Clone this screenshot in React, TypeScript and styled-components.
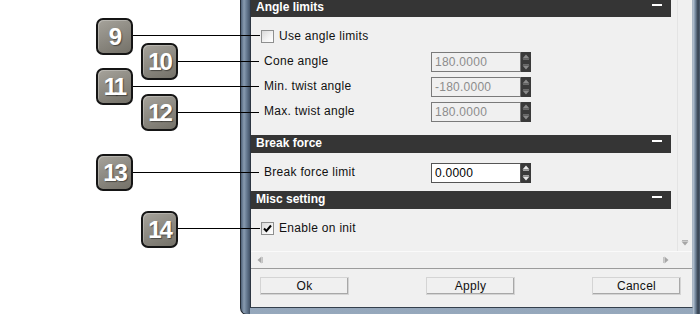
import styled, { createGlobalStyle } from "styled-components";

const GlobalStyle = createGlobalStyle`
  html, body {
    margin: 0;
    padding: 0;
    background: #ffffff;
  }
  body {
    font-family: "Liberation Sans", Arial, sans-serif;
    font-size: 12px;
    color: #111111;
    overflow: hidden;
  }
`;

const Stage = styled.div`
  position: relative;
  width: 700px;
  height: 314px;
  overflow: hidden;
  display: flex;
`;

const Frame = styled.div`
  margin-left: 240px;
  width: 461px;
  height: 315px;
  flex-shrink: 0;
  box-sizing: border-box;
  display: flex;
  padding: 0 8px 6px 9px;
  border-left: 1px solid #232a33;
  border-bottom: 1px solid #232a33;
  border-bottom-left-radius: 7px;
  background:
    linear-gradient(to right, #4f6177 0, #889bb0 3px, #62768d 6px, #425266 9px) left top / 9px 100% no-repeat,
    linear-gradient(to right, #bcc8d4 0, #7f93a9 2px, #34404e 5px, #5d7086 8px) right top / 8px 100% no-repeat,
    linear-gradient(to bottom, #55677b, #96a8bc);
`;

const Inner = styled.div`
  flex: 1;
  display: flex;
  flex-direction: column;
  background: #f0f0f0;
  border-left: 1px solid #2c3541;
  border-right: 1px solid #a9b6c4;
  border-bottom: 1px solid #34404c;
`;

const ScrollArea = styled.div`
  display: flex;
  height: 251px;
`;

const Content = styled.div`
  width: 426px;
  overflow: hidden;
  margin-top: -1px;
`;

const SectionHeader = styled.div`
  height: 18px;
  margin-right: 6px;
  padding-left: 5px;
  display: flex;
  justify-content: space-between;
  background: #353535;
  color: #ffffff;
  font-weight: bold;
  font-size: 12px;
  line-height: 16px;
`;

const Collapse = styled.span`
  width: 10px;
  height: 2px;
  margin: 5px 9px 0 0;
  background: #ffffff;
`;

const SectionBody = styled.div<{ $top: number; $bottom: number }>`
  padding-top: ${(p) => p.$top}px;
  padding-bottom: ${(p) => p.$bottom}px;
`;

const FieldRow = styled.div`
  display: flex;
  align-items: center;
  height: 25px;
  padding-left: 13px;
`;

const FieldLabel = styled.span`
  width: 167px;
  line-height: 25px;
  letter-spacing: 0.3px;
  color: #111111;
`;

const CheckRow = styled.label`
  display: flex;
  align-items: center;
  gap: 5px;
  height: 25px;
  padding-left: 10px;
  line-height: 25px;
  letter-spacing: 0.3px;
  color: #111111;
`;

const CheckBox = styled.span`
  width: 13px;
  height: 13px;
  box-sizing: border-box;
  border: 1px solid #8e8f8f;
  background: linear-gradient(135deg, #d9d9d9 0%, #f4f4f4 60%, #ffffff 100%);
  display: flex;
  align-items: center;
  justify-content: center;
`;

const Spin = styled.div`
  display: flex;
  height: 20px;
`;

const SpinField = styled.div<{ $disabled: boolean }>`
  width: 90px;
  box-sizing: border-box;
  border: 1px solid ${(p) => (p.$disabled ? "#7a7a7a" : "#555555")};
  background: ${(p) => (p.$disabled ? "#f0f0f0" : "#ffffff")};
  color: ${(p) => (p.$disabled ? "#8c8c8c" : "#000000")};
  padding-left: 3px;
  line-height: 18px;
  font-size: 12px;
  letter-spacing: 0.25px;
`;

const SpinButtons = styled.div`
  width: 10px;
  background: #3a3a3a;
`;

const VScroll = styled.div`
  width: 15px;
  box-sizing: border-box;
  border-left: 1px solid #e4e4e4;
  display: flex;
  flex-direction: column;
  justify-content: flex-end;
`;

const ScrollButton = styled.div`
  height: 17px;
  display: flex;
  align-items: center;
  justify-content: center;
`;

const HScroll = styled.div`
  display: flex;
  height: 16px;
  border-top: 1px solid #fafafa;
`;

const HTrack = styled.div`
  width: 426px;
  display: flex;
  align-items: center;
  justify-content: space-between;
  padding: 0 8px 0 6px;
  box-sizing: border-box;
`;

const ButtonBar = styled.div`
  flex: 1;
  display: flex;
  justify-content: space-between;
  align-items: flex-start;
  padding: 8px 11px 0 9px;
  border-top: 1px solid #9c9c9c;
`;

const DialogButton = styled.button`
  width: 89px;
  height: 18px;
  padding: 0;
  box-sizing: border-box;
  font-family: "Liberation Sans", Arial, sans-serif;
  font-size: 12px;
  letter-spacing: 0.3px;
  color: #111111;
  background: #f0f0f0;
  border: 1px solid;
  border-color: #ffffff #5e5e5e #5e5e5e #ffffff;
  box-shadow: inset -1px -1px 0 #a8a8a8;
  outline: 1px solid #d4d4d4;
  outline-offset: -1px;
  line-height: 15px;
`;

const Badge = styled.div<{ $x: number; $y: number }>`
  position: absolute;
  left: ${(p) => p.$x}px;
  top: ${(p) => p.$y}px;
  width: 37px;
  height: 37px;
  box-sizing: border-box;
  border: 2px solid #151515;
  border-radius: 7px;
  background: linear-gradient(155deg, #a6a39b 0%, #8c8981 50%, #747168 100%);
  box-shadow: inset 1px 1px 0 rgba(255, 255, 255, 0.25);
  display: flex;
  align-items: center;
  justify-content: center;
  color: #ffffff;
  font-family: "Liberation Sans", Arial, sans-serif;
  font-weight: bold;
  font-size: 24px;
  letter-spacing: -2px;
  text-shadow: 1px 1px 1px rgba(0, 0, 0, 0.45);
  z-index: 2;
`;

const Leader = styled.div<{ $x: number; $y: number; $end: number }>`
  position: absolute;
  left: ${(p) => p.$x}px;
  top: ${(p) => p.$y}px;
  width: ${(p) => p.$end - p.$x}px;
  height: 1px;
  background: #000000;
  z-index: 2;
`;

const SpinArrows = ({ disabled }: { disabled: boolean }) => {
  const c = disabled ? "#8a8a8a" : "#e8e8e8";
  return (
    <svg width="10" height="20" viewBox="0 0 10 20">
      <polygon points="1.5,6.5 8.5,6.5 5,2.5" fill={c} />
      <rect x="2" y="7" width="6" height="1" fill={c} opacity="0.6" />
      <rect x="2" y="12" width="6" height="1" fill={c} opacity="0.6" />
      <polygon points="1.5,13.5 8.5,13.5 5,17.5" fill={c} />
    </svg>
  );
};

const SpinInput = ({ value, disabled }: { value: string; disabled: boolean }) => (
  <Spin>
    <SpinField $disabled={disabled}>{value}</SpinField>
    <SpinButtons>
      <SpinArrows disabled={disabled} />
    </SpinButtons>
  </Spin>
);

const Check = ({ checked }: { checked: boolean }) => (
  <CheckBox>
    {checked && (
      <svg width="9" height="9" viewBox="0 0 9 9">
        <path d="M1 4.5 L3.4 7 L8 1.5" stroke="#000" strokeWidth="2" fill="none" />
      </svg>
    )}
  </CheckBox>
);

const Section = ({ title }: { title: string }) => (
  <SectionHeader>
    <span>{title}</span>
    <Collapse />
  </SectionHeader>
);

const callouts = [
  { n: "9", x: 96, y: 18, line: 35, end: 260 },
  { n: "10", x: 141, y: 43, line: 61, end: 259 },
  { n: "11", x: 96, y: 68, line: 86, end: 259 },
  { n: "12", x: 141, y: 94, line: 112, end: 259 },
  { n: "13", x: 96, y: 154, line: 172, end: 259 },
  { n: "14", x: 141, y: 211, line: 228, end: 260 },
];

export default function App() {
  return (
    <Stage>
      <GlobalStyle />
      <Frame>
        <Inner>
          <ScrollArea>
            <Content>
              <Section title="Angle limits" />
              <SectionBody $top={7} $bottom={11}>
                <CheckRow>
                  <Check checked={false} />
                  Use angle limits
                </CheckRow>
                <FieldRow>
                  <FieldLabel>Cone angle</FieldLabel>
                  <SpinInput value="180.0000" disabled />
                </FieldRow>
                <FieldRow>
                  <FieldLabel>Min. twist angle</FieldLabel>
                  <SpinInput value="-180.0000" disabled />
                </FieldRow>
                <FieldRow>
                  <FieldLabel>Max. twist angle</FieldLabel>
                  <SpinInput value="180.0000" disabled />
                </FieldRow>
              </SectionBody>
              <Section title="Break force" />
              <SectionBody $top={7} $bottom={6}>
                <FieldRow>
                  <FieldLabel>Break force limit</FieldLabel>
                  <SpinInput value="0.0000" disabled={false} />
                </FieldRow>
              </SectionBody>
              <Section title="Misc setting" />
              <SectionBody $top={7} $bottom={0}>
                <CheckRow>
                  <Check checked />
                  Enable on init
                </CheckRow>
              </SectionBody>
            </Content>
            <VScroll>
              <ScrollButton>
                <svg width="8" height="6" viewBox="0 0 8 6">
                  <rect x="1" y="0" width="6" height="1" fill="#b4b4b4" />
                  <polygon points="0.5,1.5 7.5,1.5 4,5.5" fill="#a6a6a6" />
                </svg>
              </ScrollButton>
            </VScroll>
          </ScrollArea>
          <HScroll>
            <HTrack>
              <svg width="6" height="8" viewBox="0 0 6 8">
                <polygon points="4.5,0.5 4.5,7.5 0.5,4" fill="#a6a6a6" />
                <rect x="5" y="1" width="1" height="6" fill="#c4c4c4" />
              </svg>
              <svg width="6" height="8" viewBox="0 0 6 8">
                <rect x="0" y="1" width="1" height="6" fill="#c4c4c4" />
                <polygon points="1.5,0.5 1.5,7.5 5.5,4" fill="#a6a6a6" />
              </svg>
            </HTrack>
          </HScroll>
          <ButtonBar>
            <DialogButton>Ok</DialogButton>
            <DialogButton>Apply</DialogButton>
            <DialogButton>Cancel</DialogButton>
          </ButtonBar>
        </Inner>
      </Frame>
      {callouts.map((c) => (
        <Leader key={`l${c.n}`} $x={c.x + 37} $y={c.line} $end={c.end} />
      ))}
      {callouts.map((c) => (
        <Badge key={c.n} $x={c.x} $y={c.y}>
          {c.n}
        </Badge>
      ))}
    </Stage>
  );
}
